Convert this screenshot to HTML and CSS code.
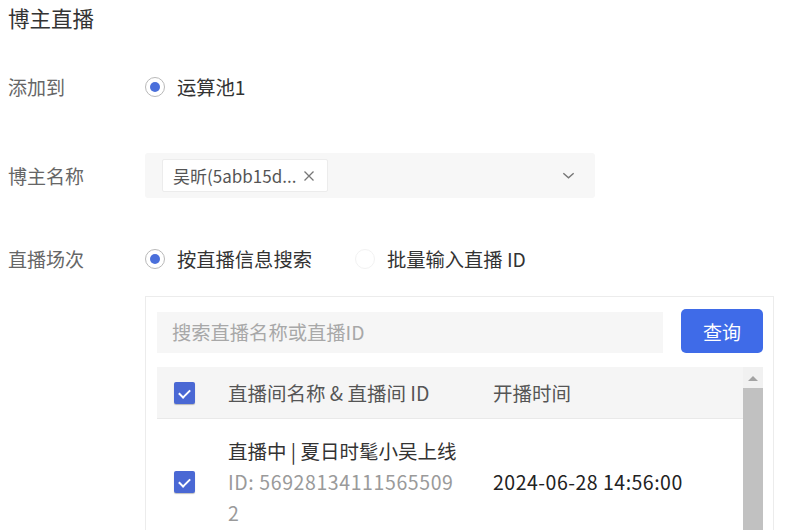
FILE: index.html
```html
<!DOCTYPE html>
<html lang="zh-CN">
<head>
    <meta charset="UTF-8">
    <meta name="viewport" content="width=device-width, initial-scale=1.0">
    <title>博主直播</title>
    <link rel="stylesheet" href="styles.css">
</head>
<body>
    <div class="page">
        <h1 class="page-title">博主直播</h1>

        <div class="form-item form-item-pool">
            <div class="form-label">添加到</div>
            <div class="form-control">
                <label class="radio checked">
                    <span class="radio-circle"></span>
                    <span class="radio-text">运算池1</span>
                </label>
            </div>
        </div>

        <div class="form-item form-item-blogger">
            <div class="form-label">博主名称</div>
            <div class="form-control">
                <div class="select">
                    <span class="tag">
                        吴昕(5abb15d...
                        <svg class="tag-close" viewBox="0 0 12 12">
                            <path d="M1.5 1.5l9 9M10.5 1.5l-9 9"></path>
                        </svg>
                    </span>
                    <svg class="select-arrow" viewBox="0 0 16 16">
                        <path d="M2.5 5.5l5.5 5 5.5-5"></path>
                    </svg>
                </div>
            </div>
        </div>

        <div class="form-item form-item-live">
            <div class="form-label">直播场次</div>
            <div class="form-control radio-group">
                <label class="radio checked">
                    <span class="radio-circle"></span>
                    <span class="radio-text">按直播信息搜索</span>
                </label>
                <label class="radio">
                    <span class="radio-circle"></span>
                    <span class="radio-text">批量输入直播 ID</span>
                </label>
            </div>
        </div>

        <div class="live-panel">
            <div class="search-bar">
                <div class="search-input">搜索直播名称或直播ID</div>
                <button class="search-button">查询</button>
            </div>

            <div class="live-table">
                <div class="table-body">
                    <div class="table-row table-head">
                        <div class="cell cell-check"><span class="checkbox checked"></span></div>
                        <div class="cell cell-name">直播间名称 &amp; 直播间 ID</div>
                        <div class="cell cell-time">开播时间</div>
                    </div>
                    <div class="table-row">
                        <div class="cell cell-check"><span class="checkbox checked"></span></div>
                        <div class="cell cell-name">
                            <div class="live-name">直播中 | 夏日时髦小吴上线</div>
                            <div class="live-id">ID: 569281341115655092</div>
                        </div>
                        <div class="cell cell-time">2024-06-28 14:56:00</div>
                    </div>
                </div>
                <div class="scrollbar">
                    <span class="scrollbar-arrow"></span>
                    <span class="scrollbar-thumb"></span>
                </div>
            </div>
        </div>
    </div>
</body>
</html>
```

FILE: styles.css
```css
* {
    margin: 0;
    padding: 0;
    box-sizing: border-box;
}

body {
    width: 800px;
    height: 530px;
    overflow: hidden;
    background: #fff;
    font-family: "Noto Sans CJK SC", "Noto Sans", sans-serif;
    color: #333;
}

.page {
    padding: 0 8px;
}

.page-title {
    height: 38px;
    line-height: 36px;
    font-size: 21.5px;
    font-weight: normal;
    color: #333;
}

.form-item {
    display: flex;
    align-items: center;
    min-height: 45px;
}

.form-item-pool {
    margin-top: 26px;
}

.form-item-blogger {
    margin-top: 44px;
}

.form-item-live {
    margin-top: 38px;
}

.form-label {
    width: 137px;
    flex: none;
    font-size: 19px;
    color: #666;
}

.form-control {
    display: flex;
    align-items: center;
}

.radio-group {
    gap: 43px;
}

.radio {
    display: flex;
    align-items: center;
    gap: 12px;
    font-size: 19.3px;
    color: #333;
}

.radio-circle {
    position: relative;
    width: 20px;
    height: 20px;
    border-radius: 50%;
    border: 1px solid #f2f2f2;
    background: #fff;
}

.radio.checked .radio-circle {
    border-color: #b9b9b9;
}

.radio.checked .radio-circle::after {
    content: "";
    position: absolute;
    top: 4px;
    left: 4px;
    width: 10px;
    height: 10px;
    border-radius: 50%;
    background: #4a6fdb;
}

.select {
    display: flex;
    align-items: center;
    justify-content: space-between;
    width: 450px;
    height: 45px;
    padding: 0 19px 0 17px;
    background: #f7f7f7;
    border-radius: 3px;
}

.tag {
    display: flex;
    align-items: center;
    gap: 7px;
    height: 33px;
    padding: 0 12px 0 10px;
    background: #fff;
    border: 1px solid #ececec;
    border-radius: 2px;
    font-size: 17px;
    color: #555;
}

.tag-close {
    width: 12px;
    height: 12px;
    fill: none;
    stroke: #777;
    stroke-width: 1.3;
}

.select-arrow {
    width: 15px;
    height: 15px;
    fill: none;
    stroke: #777;
    stroke-width: 1.5;
}

.live-panel {
    width: 629px;
    height: 240px;
    margin: 15px 0 0 137px;
    padding: 12px 10px 0 11px;
    border: 1px solid #ececec;
}

.search-bar {
    display: flex;
    align-items: flex-end;
    gap: 18px;
}

.search-input {
    flex: 1;
    height: 41px;
    line-height: 41px;
    padding-left: 15px;
    background: #f6f6f6;
    font-size: 19.3px;
    color: #a8a8a8;
}

.search-button {
    width: 82px;
    height: 44px;
    border: none;
    border-radius: 5px;
    background: #3f6be8;
    color: #fff;
    font-family: inherit;
    font-size: 19px;
}

.live-table {
    display: flex;
    margin-top: 14px;
    height: 200px;
}

.table-body {
    flex: 1;
}

.table-row {
    display: flex;
    align-items: center;
    padding-top: 16px;
    font-size: 19.5px;
    line-height: 31px;
}

.table-head {
    height: 52px;
    padding-top: 0;
    background: #f5f5f5;
    border-bottom: 1px solid #e9e9e9;
    color: #555;
}

.cell-check {
    width: 71px;
    flex: none;
    padding-left: 17px;
    display: flex;
}

.cell-name {
    width: 265px;
    flex: none;
    padding-right: 36px;
    word-break: break-all;
}

.cell-time {
    color: #222;
    letter-spacing: 0.5px;
}

.table-head .cell-time {
    color: #555;
    letter-spacing: 0;
}

.live-name {
    color: #333;
}

.live-id {
    color: #9a9a9a;
    letter-spacing: 0.6px;
}

.checkbox {
    position: relative;
    width: 21px;
    height: 22px;
    border-radius: 2px;
    background: #4a68d4;
    box-shadow: 0 1px 1px rgba(0, 0, 0, 0.25);
}

.checkbox.checked::after {
    content: "";
    position: absolute;
    top: 5px;
    left: 7px;
    width: 5px;
    height: 9px;
    border: solid #fff;
    border-width: 0 2px 2px 0;
    transform: rotate(45deg);
}

.scrollbar {
    width: 20px;
    flex: none;
    display: flex;
    flex-direction: column;
    align-items: center;
    background: #f1f1f1;
}

.scrollbar-arrow {
    margin-top: 9px;
    width: 0;
    height: 0;
    border-left: 5px solid transparent;
    border-right: 5px solid transparent;
    border-bottom: 5px solid #a3a3a3;
}

.scrollbar-thumb {
    margin-top: 7px;
    width: 20px;
    flex: 1;
    background: #c1c1c1;
}
```
